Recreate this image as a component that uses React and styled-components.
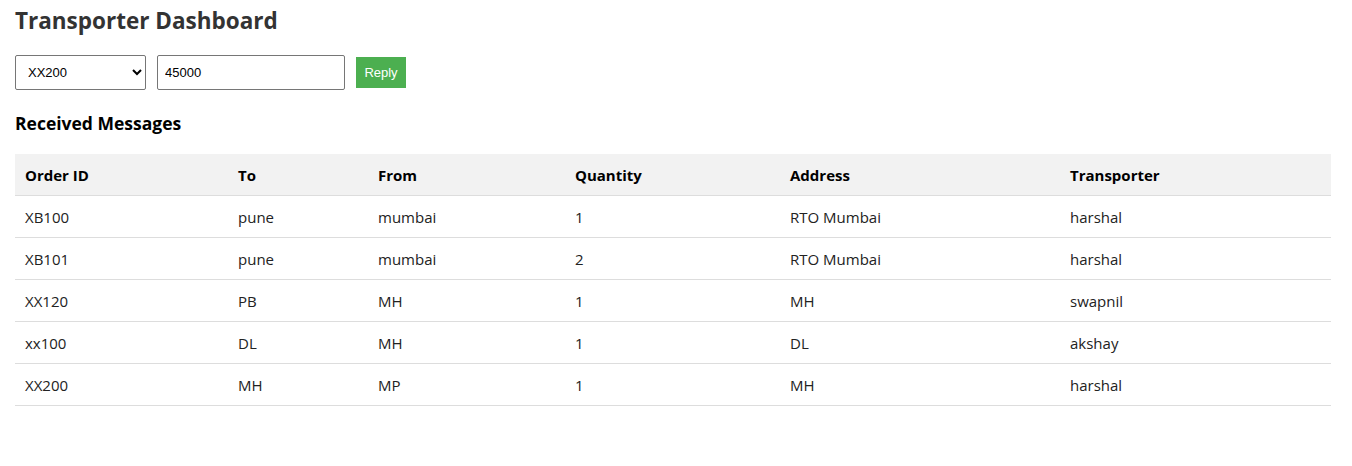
import React, { useState } from "react";
import styled, { createGlobalStyle } from "styled-components";

const GlobalStyle = createGlobalStyle`
	body {
		margin: 0;
		background: #fff;
		font-family: "Open Sans", "Noto Sans", sans-serif;
		color: #333;
	}
`;

const Page = styled.div`
	padding: 6px 21px 20px 15px;
`;

const Title = styled.h2`
	margin: 0 0 19px;
	font-size: 22.5px;
	font-weight: 700;
	color: #333;
	line-height: 30px;
`;

const ReplyBar = styled.div`
	display: flex;
	align-items: center;
	gap: 11px;
`;

const Select = styled.select`
	width: 131px;
	height: 35px;
	padding: 0 8px;
	font-family: "Liberation Sans", Arial, sans-serif;
	font-size: 13px;
	color: #000;
	border: 1px solid #767676;
	border-radius: 2px;
	background: #fff;
`;

const Input = styled.input`
	width: 188px;
	height: 35px;
	box-sizing: border-box;
	padding: 0 7px;
	font-family: "Liberation Sans", Arial, sans-serif;
	font-size: 13px;
	color: #000;
	border: 1px solid #767676;
	border-radius: 2px;
	outline: none;
`;

const Button = styled.button`
	width: 50px;
	height: 31px;
	border: none;
	background: #4caf50;
	color: #fff;
	font-family: "Liberation Sans", Arial, sans-serif;
	font-size: 13px;
	cursor: pointer;
`;

const SubTitle = styled.h3`
	margin: 21px 0 19px;
	font-size: 17.5px;
	font-weight: 700;
	color: #000;
	line-height: 24px;
`;

const Table = styled.table`
	width: 100%;
	border-collapse: collapse;
	table-layout: fixed;
	font-size: 15px;
`;

const Th = styled.th`
	width: ${(p) => (p.$w ? `${p.$w - 20}px` : "auto")};
	height: 41px;
	padding: 0 10px;
	text-align: left;
	font-weight: 700;
	color: #000;
	background: #f2f2f2;
	border-bottom: 1px solid #ddd;
`;

const Td = styled.td`
	height: 41px;
	padding: 0 10px;
	text-align: left;
	color: #222;
	border-bottom: 1px solid #ddd;
`;

const columns = [
	{ label: "Order ID", w: 213 },
	{ label: "To", w: 140 },
	{ label: "From", w: 197 },
	{ label: "Quantity", w: 215 },
	{ label: "Address", w: 280 },
	{ label: "Transporter" },
];

const messages = [
	["XB100", "pune", "mumbai", "1", "RTO Mumbai", "harshal"],
	["XB101", "pune", "mumbai", "2", "RTO Mumbai", "harshal"],
	["XX120", "PB", "MH", "1", "MH", "swapnil"],
	["xx100", "DL", "MH", "1", "DL", "akshay"],
	["XX200", "MH", "MP", "1", "MH", "harshal"],
];

export default function App() {
	const [order, setOrder] = useState("XX200");
	const [price, setPrice] = useState("45000");

	return (
		<>
			<GlobalStyle />
			<Page>
				<Title>Transporter Dashboard</Title>
				<ReplyBar>
					<Select value={order} onChange={(e) => setOrder(e.target.value)}>
						{messages.map((m) => (
							<option key={m[0]} value={m[0]}>
								{m[0]}
							</option>
						))}
					</Select>
					<Input value={price} onChange={(e) => setPrice(e.target.value)} />
					<Button>Reply</Button>
				</ReplyBar>
				<SubTitle>Received Messages</SubTitle>
				<Table>
					<thead>
						<tr>
							{columns.map((c) => (
								<Th key={c.label} $w={c.w}>
									{c.label}
								</Th>
							))}
						</tr>
					</thead>
					<tbody>
						{messages.map((m) => (
							<tr key={m[0]}>
								{m.map((cell, i) => (
									<Td key={i}>{cell}</Td>
								))}
							</tr>
						))}
					</tbody>
				</Table>
			</Page>
		</>
	);
}
